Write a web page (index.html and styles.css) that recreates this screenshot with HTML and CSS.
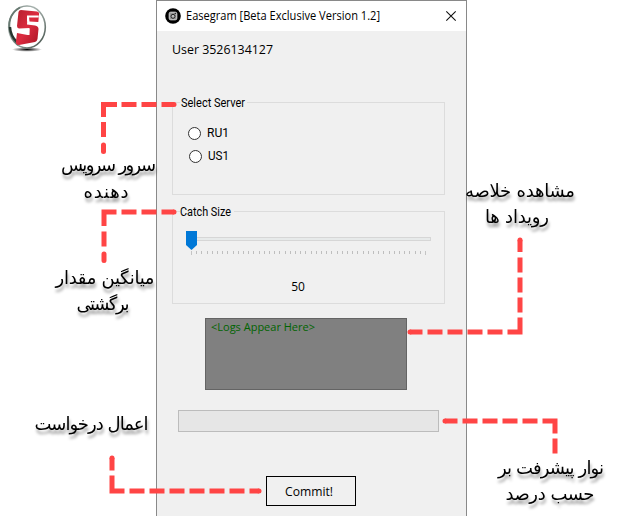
FILE: index.html
```html
<!DOCTYPE html>
<html lang="en">
<head>
<meta charset="utf-8">
<title>Easegram</title>
<link rel="stylesheet" href="styles.css">
</head>
<body>
<main class="stage">
  <svg class="logo" width="56" height="56" viewBox="0 0 56 56">
    <defs>
      <linearGradient id="ring" x1="0" y1="0" x2="1" y2="1"><stop offset="0" stop-color="#73837d"/><stop offset=".35" stop-color="#a9b4b0"/><stop offset=".65" stop-color="#84908b"/><stop offset="1" stop-color="#38463f"/></linearGradient>
      <linearGradient id="red" x1="0" y1="0" x2="1" y2="1"><stop offset="0" stop-color="#b51e2d"/><stop offset=".5" stop-color="#dc2c40"/><stop offset="1" stop-color="#a91423"/></linearGradient>
      <radialGradient id="shade"><stop offset="0" stop-color="#000"/><stop offset="1" stop-color="#000" stop-opacity="0"/></radialGradient>
    </defs>
    <ellipse cx="27" cy="49.500" rx="15" ry="2.300" fill="url(#shade)"/>
    <ellipse cx="27" cy="27" rx="18.300" ry="21" fill="none" stroke="url(#ring)" stroke-width="1.600"/>
    <path d="M20 7.500Q8 14 9.500 29Q11 39 18 45" fill="none" stroke="#687a72" stroke-width="1.800"/>
    <path d="M10 27Q10.500 36 17 42" fill="none" stroke="#26352e" stroke-width="2.400"/>
    <path d="M21 10L37 11.500Q39.500 12 39 14.500L38.300 22L29.500 21.500L29 17H27.500L27 24.500L35 25.500Q38.500 26 38.500 29L37.500 39Q37 41.500 35 42L19 45Q15.500 45 16 41L17 33L27.500 35L29 34.500L29.500 28L19 28.500Q17 28 17 26L18.500 12Q19 10 21 10Z" fill="url(#red)"/>
    <path d="M38.700 16.500H28V21.500M17 31.500L28.500 30V35" fill="none" stroke="#fff" stroke-width="2"/>
  </svg>

  <section class="window">
    <header class="titlebar">
      <svg class="app-icon" width="16" height="16" viewBox="0 0 16 16"><circle cx="8" cy="8" r="7.800" fill="#000"/><rect x="4.200" y="4.200" width="7.600" height="7.600" rx="1.500" fill="#999" stroke="#ddd"/><circle cx="8" cy="8.300" r="2" fill="#bbb" stroke="#222"/><path d="M9.700 5.400h1.200" stroke="#111"/></svg>
      <svg class="title" width="202" height="24"><text x="0" y="16" textLength="194" lengthAdjust="spacingAndGlyphs">Easegram [Beta Exclusive Version 1.2]</text></svg>
      <svg class="close" width="10" height="10" viewBox="0 0 10 10"><path d="M.3 .3L9.700 9.700M9.700 .3L.3 9.700" stroke="#111" stroke-width="1.100"/></svg>
    </header>
    <div class="user"><svg width="110" height="22"><text x="0" y="16" textLength="101" lengthAdjust="spacingAndGlyphs">User 3526134127</text></svg></div>
    <section class="group server">
      <div class="legend"><svg width="67" height="18"><text x="1" y="13" textLength="64" lengthAdjust="spacingAndGlyphs">Select Server</text></svg></div>
      <label class="option"><span class="radio"></span><svg width="24" height="18"><text x="0" y="13" textLength="22" lengthAdjust="spacingAndGlyphs">RU1</text></svg></label>
      <label class="option second"><span class="radio"></span><svg width="24" height="18"><text x="0" y="13" textLength="21" lengthAdjust="spacingAndGlyphs">US1</text></svg></label>
    </section>
    <section class="group size">
      <div class="legend"><svg width="54" height="18"><text x="0" y="13" textLength="51" lengthAdjust="spacingAndGlyphs">Catch Size</text></svg></div>
      <svg class="slider" width="248" height="30" viewBox="0 0 248 30">
        <rect x="3.500" y="6.500" width="242" height="3" fill="#e7eaea" stroke="#d6d6d6"/>
        <path d="M6.500 20v4M240.500 20v4" stroke="#c4c4c4"/>
        <path d="M11.200 21.500H238" stroke="#bebebe" stroke-width="3" stroke-dasharray="1 4.200" shape-rendering="crispEdges"/>
        <path d="M1 0H12V14L6.500 19L1 14Z" fill="#0078d7"/>
      </svg>
      <div class="value">50</div>
    </section>
    <div class="logs"><svg width="110" height="18"><text x="0" y="12" textLength="104" lengthAdjust="spacingAndGlyphs">&lt;Logs Appear Here&gt;</text></svg></div>
    <div class="progress"></div>
    <button class="commit"><svg width="50" height="20"><text x="0" y="15" textLength="48" lengthAdjust="spacingAndGlyphs">Commit!</text></svg></button>
  </section>

  <svg class="annotations" width="622" height="521" viewBox="0 0 622 521">
    <g class="dashes">
      <path d="M103.500 117V104.500H117M103.500 122V137M121.500 104.500H136.500M141.500 104.500H156.500M161.500 104.500H174"/>
      <path d="M104 226V212H116.500M104 231.500V246.500M121.500 212H136.500M141.500 212H156.500M161.500 212H174"/>
      <path d="M520 240V252M520 257.500V272.500M520 277.500V292.500M520 297.500V312.500M520 317.500V332H507.500M502.500 332H487.500M482.500 332H467.500M462.500 332H447.500M442.500 332H427.500M422.500 332H410"/>
      <path d="M445 421H457.500M462.500 421H477.500M482.500 421H497.500M502.500 421H517.500M522.500 421H537.500M542.500 421H555V433.500M555 438.500V453.500"/>
      <path d="M112 458V470.500M112 475.500V491H124.500M129.500 491H144.500M149.500 491H164.500M169.500 491H184.500M189.500 491H204.500M209.500 491H224.500M229.500 491H244.500M249.500 491H259"/>
    </g>
    <g class="ends"><path d="M103.500 145V151.500M174 104.500h.01M104 254V260.500M174 212h.01M520 240h.01M410 332h.01M445 421h.01M112 458h.01M259 491h.01"/></g>
    <g class="farsi" direction="rtl">
      <text x="108.500" y="171" textLength="95">سرور سرویس</text>
      <text x="106" y="198" textLength="45">دهنده</text>
      <text x="105" y="284" textLength="99">میانگین مقدار</text>
      <text x="103" y="310" textLength="53">برگشتی</text>
      <text x="520" y="197" textLength="110">مشاهده خلاصه</text>
      <text x="517" y="223" textLength="64">رویداد ها</text>
      <text x="91.500" y="430" textLength="114">اعمال درخواست</text>
      <text x="551" y="474" textLength="106">نوار پیشرفت بر</text>
      <text x="550" y="500" textLength="89">حسب درصد</text>
    </g>
  </svg>
</main>
</body>
</html>
```
FILE: styles.css
```css
* { box-sizing: border-box; }
body { margin: 0; background: #fff; }
svg { display: block; flex: none; overflow: visible; }
.stage { position: relative; width: 622px; height: 521px; overflow: hidden; font: 12px "Open Sans", "Noto Sans", sans-serif; color: #000; }
.logo { position: absolute; left: 0; top: 0; }
.window { width: 311px; height: 516px; margin-left: 156px; background: #f0f0f0; border: 1px solid #898989; border-bottom: 0; display: flex; flex-direction: column; }
.titlebar { height: 30px; flex: none; background: #fff; display: flex; align-items: center; padding: 0 10px 0 8px; }
.title { margin-left: 5px; }
.close { margin-left: auto; }
.user { height: 71px; flex: none; padding: 7px 0 0 15px; }
.group { width: 273px; margin-left: 15px; border: 1px solid #dcdcdc; flex: none; }
.legend { width: max-content; height: 18px; margin: -9px 0 0 7px; background: #f0f0f0; font-family: Roboto, sans-serif; }
.server { height: 93px; }
.size { height: 93px; margin-top: 16px; }
.option { display: flex; align-items: center; height: 18px; margin: 12px 0 0 15px; font-family: Roboto, sans-serif; }
.option.second { margin: 5px 0 0 16px; }
.radio { width: 13px; height: 13px; border: 1px solid #333; border-radius: 50%; background: #fff; margin-right: 6px; }
.slider { margin: 10px 0 0 12px; }
.value { width: 250px; text-align: center; margin-top: 17px; line-height: 18px; font-size: 12px; }
.logs { width: 202px; height: 72px; flex: none; margin: 14px 0 0 48px; padding: 0 0 0 5px; border: 1px solid #646464; background: #808080; font-size: 11px; }
.logs text { fill: #006400; }
.progress { width: 261px; height: 22px; flex: none; margin: 20px 0 0 21px; background: #e6e6e6; border: 1px solid #bcbcbc; }
.commit { width: 90px; height: 30px; flex: none; margin: 44px 0 0 109px; background: #f0f0f0; border: 1px solid #000; padding: 0 0 0 18px; font: 12px "Open Sans", sans-serif; }
.annotations { position: absolute; inset: 0; }
.dashes { fill: none; stroke: #ff4545; stroke-width: 5; }
.ends { fill: none; stroke: #ff4545; stroke-width: 5; stroke-linecap: round; }
.farsi { font: 18px "DejaVu Sans", sans-serif; text-anchor: middle; filter: drop-shadow(1px 4px 1.5px #0006); }
```
